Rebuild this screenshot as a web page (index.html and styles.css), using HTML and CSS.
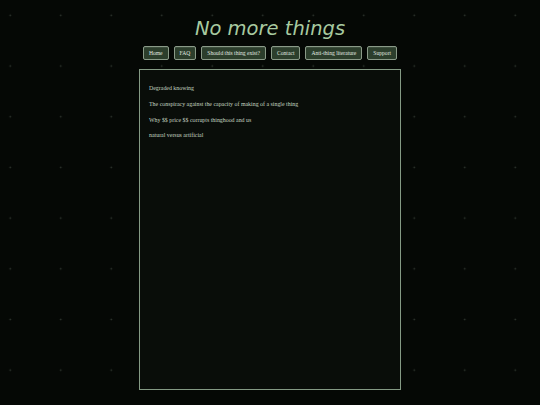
FILE: index.html
```html
<!DOCTYPE html>
<html>
<head>
<meta charset="utf-8">
<link rel="stylesheet" href="styles.css">
</head>
<body>
<header class="header">
  <h1 class="title">No more things</h1>
  <nav class="nav">
    <a class="btn">Home</a>
    <a class="btn">FAQ</a>
    <a class="btn">Should this thing exist?</a>
    <a class="btn">Contact</a>
    <a class="btn">Anti-thing literature</a>
    <a class="btn">Support</a>
  </nav>
</header>
<main class="content">
  <p>Degraded knowing</p>
  <p>The conspiracy against the capacity of making of a single thing</p>
  <p>Why $$ price $$ corrupts thinghood and us</p>
  <p>natural versus artificial</p>
</main>
</body>
</html>
```
FILE: styles.css
```css
html, body {
  margin: 0;
  padding: 0;
}
body {
  width: 540px;
  height: 405px;
  overflow: hidden;
  background-color: #050805;
  background-image: radial-gradient(circle, #323a32 0.7px, transparent 1.1px);
  background-size: 50.5px 50.7px;
  background-position: -15px -10px;
  font-family: "Liberation Serif", serif;
}
.header {
  display: flex;
  flex-direction: column;
  align-items: center;
  padding-top: 15px;
}
.title {
  margin: 0;
  font-family: "DejaVu Sans", sans-serif;
  font-style: italic;
  font-weight: normal;
  font-size: 19.5px;
  line-height: 27px;
  color: #a8caa0;
}
.nav {
  display: flex;
  gap: 5px;
  margin-top: 4px;
}
.btn {
  display: block;
  height: 12px;
  line-height: 12px;
  padding: 0 5px;
  border: 1px solid #8a9a88;
  border-radius: 2px;
  background: #2c3e2c;
  color: #e0e8e0;
  font-size: 5.6px;
  box-shadow: inset 0 1px 0 rgba(255,255,255,0.08);
}
.content {
  margin: 9px auto 0;
  border: 1px solid #849a84;
  background: #090d09;
  padding: 14px 0 0 9px;
  box-sizing: border-box;
  width: 262px;
  height: 321px;
}
.content p {
  margin: 0 0 7.8px;
  font-size: 5.9px;
  line-height: 8px;
  color: #c4d4c0;
}
```
